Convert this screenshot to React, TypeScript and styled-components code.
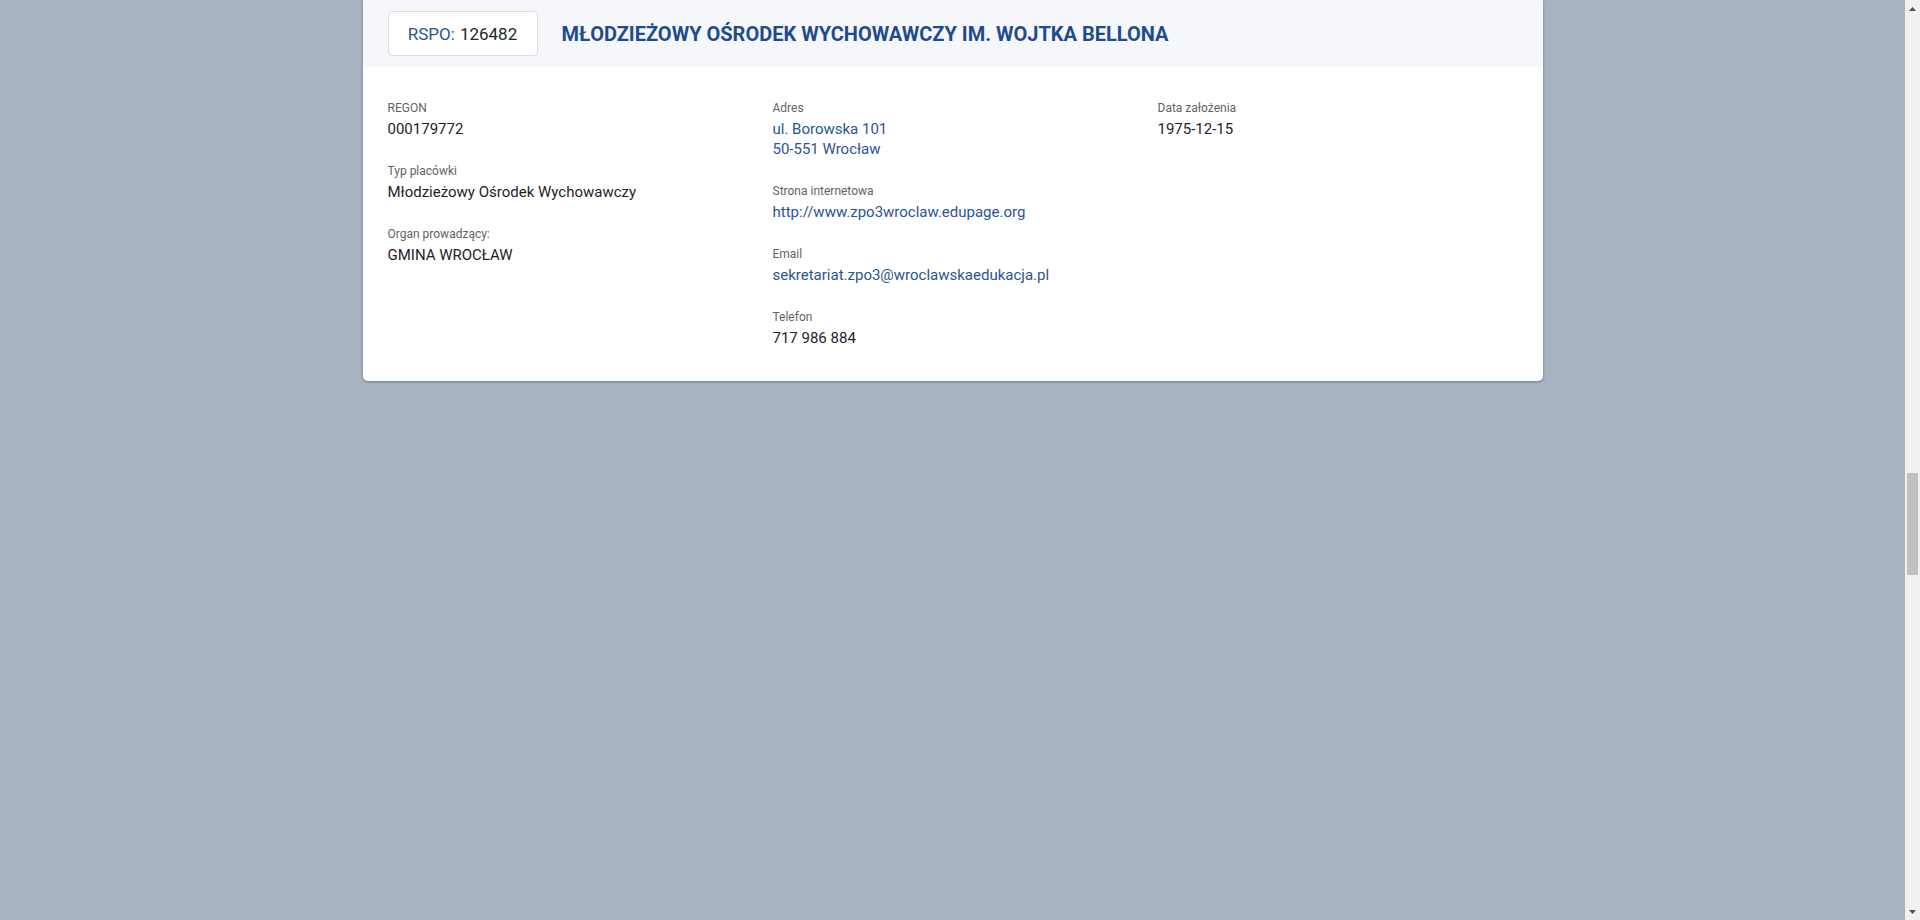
import React from "react";
import styled, { createGlobalStyle } from "styled-components";

const GlobalStyle = createGlobalStyle`
  html {
    background: #a8b3c2;
  }
  body {
    margin: 0;
    background: #a8b3c2;
    font-family: Roboto, "Liberation Sans", Arial, sans-serif;
    color: #212529;
    min-height: 920px;
    overflow: hidden;
  }
`;

const Page = styled.main`
  display: flex;
  justify-content: center;
  min-height: 920px;
  padding-right: 15px;
`;

const Card = styled.article`
  width: 1180px;
  align-self: flex-start;
  background: #ffffff;
  border-radius: 0 0 5px 5px;
  box-shadow: 0 1px 3px rgba(40, 50, 70, 0.45);
  overflow: hidden;
`;

const Header = styled.header`
  display: flex;
  align-items: center;
  gap: 24px;
  height: 67px;
  padding: 0 25px;
  background: #f5f7fb;
`;

const RspoBadge = styled.div`
  display: flex;
  align-items: center;
  justify-content: center;
  gap: 5px;
  width: 150px;
  height: 45px;
  box-sizing: border-box;
  background: #ffffff;
  border: 1px solid #d9dee6;
  border-radius: 4px;
  font-size: 17px;
  color: #222831;
`;

const RspoLabel = styled.span`
  color: #2c5490;
`;

const Title = styled.h1`
  margin: 0;
  font-size: 20px;
  font-weight: 700;
  color: #1f4b8e;
  letter-spacing: 0;
`;

const Body = styled.div`
  display: grid;
  grid-template-columns: repeat(3, 1fr);
  column-gap: 25px;
  padding: 32px 25px 33px;
`;

const Column = styled.div`
  display: flex;
  flex-direction: column;
  gap: 23px;
`;

const Field = styled.div`
  display: flex;
  flex-direction: column;
  gap: 2px;
`;

const Label = styled.span`
  font-size: 12px;
  line-height: 18px;
  color: #5f6368;
`;

const Value = styled.span`
  font-size: 15px;
  line-height: 20px;
  color: #1f232a;
`;

const LinkValue = styled.a`
  font-size: 15px;
  line-height: 20px;
  color: #2a5594;
  text-decoration: none;
`;

const Address = styled.a`
  display: flex;
  flex-direction: column;
  font-size: 15px;
  line-height: 20px;
  color: #2a5594;
  text-decoration: none;
`;

/* Browser scrollbar drawn over the page's right edge */
const Scrollbar = styled.div`
  position: fixed;
  top: 0;
  right: 0;
  width: 15px;
  height: 100vh;
  display: flex;
  flex-direction: column;
  background: #f1f1f1;
`;

const ArrowButton = styled.div`
  height: 17px;
  display: flex;
  align-items: center;
  justify-content: center;
  flex: none;
`;

const Track = styled.div`
  flex: 1;
  display: flex;
  flex-direction: column;
  padding-top: 456px;
`;

const Thumb = styled.div`
  height: 102px;
  margin: 0 2px;
  background: #c1c1c1;
`;

export default function App() {
  return (
    <>
      <GlobalStyle />
      <Page>
        <Card>
          <Header>
            <RspoBadge>
              <RspoLabel>RSPO:</RspoLabel>
              <span>126482</span>
            </RspoBadge>
            <Title>MŁODZIEŻOWY OŚRODEK WYCHOWAWCZY IM. WOJTKA BELLONA</Title>
          </Header>
          <Body>
            <Column>
              <Field>
                <Label>REGON</Label>
                <Value>000179772</Value>
              </Field>
              <Field>
                <Label>Typ placówki</Label>
                <Value>Młodzieżowy Ośrodek Wychowawczy</Value>
              </Field>
              <Field>
                <Label>Organ prowadzący:</Label>
                <Value>GMINA WROCŁAW</Value>
              </Field>
            </Column>
            <Column>
              <Field>
                <Label>Adres</Label>
                <Address href="#">
                  <span>ul. Borowska 101</span>
                  <span>50-551 Wrocław</span>
                </Address>
              </Field>
              <Field>
                <Label>Strona internetowa</Label>
                <LinkValue href="#">http://www.zpo3wroclaw.edupage.org</LinkValue>
              </Field>
              <Field>
                <Label>Email</Label>
                <LinkValue href="#">sekretariat.zpo3@wroclawskaedukacja.pl</LinkValue>
              </Field>
              <Field>
                <Label>Telefon</Label>
                <Value>717 986 884</Value>
              </Field>
            </Column>
            <Column>
              <Field>
                <Label>Data założenia</Label>
                <Value>1975-12-15</Value>
              </Field>
            </Column>
          </Body>
        </Card>
      </Page>
      <Scrollbar>
        <ArrowButton>
          <svg width="7" height="4" viewBox="0 0 7 4">
            <path d="M0 4 L3.5 0 L7 4 Z" fill="#505050" />
          </svg>
        </ArrowButton>
        <Track>
          <Thumb />
        </Track>
        <ArrowButton>
          <svg width="7" height="4" viewBox="0 0 7 4">
            <path d="M0 0 L3.5 4 L7 0 Z" fill="#505050" />
          </svg>
        </ArrowButton>
      </Scrollbar>
    </>
  );
}
